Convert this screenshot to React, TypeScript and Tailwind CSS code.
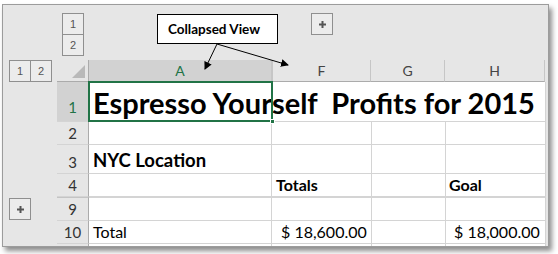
import React from 'react';

const cellFont = { fontFamily: 'Lato, "Liberation Sans", sans-serif' };

const OutlineBtn: React.FC<{ children: React.ReactNode; className?: string }> = ({ children, className = '' }) => (
  <div
    className={`w-[22px] h-[22px] border border-[#8f8f8f] bg-[#ececec] flex items-center justify-center text-[11px] text-[#555] ${className}`}
    style={{ fontFamily: '"Liberation Sans", Arial, sans-serif' }}
  >
    {children}
  </div>
);

const PlusIcon = () => (
  <svg width="9" height="9" viewBox="0 0 9 9">
    <path d="M4.5 1v7M1 4.5h7" stroke="#555" strokeWidth="2" />
  </svg>
);

// widths of the visible columns: A, F, G, H
const cols = [183, 100, 74, 100];

type RowProps = {
  n: string;
  h: string;
  selected?: boolean;
  topLine?: boolean;
  strip?: React.ReactNode;
  children: React.ReactNode;
};

const Row: React.FC<RowProps> = ({ n, h, selected, topLine, strip, children }) => (
  <div className={`flex shrink-0 ${h}`}>
    <div className="w-[54px] shrink-0 flex items-center pl-[6px]">{strip}</div>
    <div
      className={`w-[32px] shrink-0 border-b border-r border-r-[#ababab] border-b-[#d4d4d4] flex items-end justify-center pb-[3px] text-[15px] leading-none ${
        selected ? 'bg-[#d2d2d2] text-[#217346] pb-[6px]' : 'text-[#333]'
      } ${topLine ? 'border-t border-t-[#c4c4c4]' : ''}`}
      style={cellFont}
    >
      {n}
    </div>
    <div className={`flex bg-white ${topLine ? 'border-t border-t-[#d4d4d4]' : ''}`}>{children}</div>
  </div>
);

const Cell: React.FC<{ i: number; className?: string; children?: React.ReactNode }> = ({ i, className = '', children }) => (
  <div
    className={`shrink-0 border-b border-r border-[#d4d4d4] flex items-end whitespace-nowrap text-[16px] leading-none text-black ${className}`}
    style={{ ...cellFont, width: cols[i] }}
  >
    {children}
  </div>
);

export default function App() {
  return (
    <div className="relative w-[558px] h-[254px] bg-white overflow-hidden">
      <div className="ml-[2px] mt-[4px] w-[547px] h-[243px] border border-[#9c9c9c] bg-[#e6e6e6] shadow-[3px_4px_5px_rgba(0,0,0,0.45)] overflow-hidden flex flex-col">
        {/* top outline strip */}
        <div className="h-[55px] shrink-0 flex items-start pt-[8px] pl-[59px]">
          <div className="flex flex-col">
            <OutlineBtn>1</OutlineBtn>
            <OutlineBtn className="-mt-px">2</OutlineBtn>
          </div>
          <OutlineBtn className="ml-[227px]">
            <PlusIcon />
          </OutlineBtn>
        </div>

        {/* column headers */}
        <div className="flex h-[22px] shrink-0">
          <div className="w-[54px] shrink-0 flex items-center pl-[6px]">
            <OutlineBtn>1</OutlineBtn>
            <OutlineBtn className="-ml-px">2</OutlineBtn>
          </div>
          <div className="w-[32px] shrink-0 border-b border-r border-[#ababab] flex items-end justify-end p-[3px]">
            <svg width="13" height="13" viewBox="0 0 13 13">
              <path d="M13 0V13H0Z" fill="#b9b9b9" />
            </svg>
          </div>
          {['A', 'F', 'G', 'H'].map((c, i) => (
            <div
              key={c}
              className={`shrink-0 border-b border-r border-b-[#ababab] border-r-[#c6c6c6] flex items-center justify-center text-[14px] ${
                i === 0 ? 'bg-[#d2d2d2] text-[#217346]' : 'text-[#444]'
              } ${i === 1 ? 'border-l border-l-[#c6c6c6]' : ''}`}
              style={{ ...cellFont, width: i === 1 ? cols[i] - 1 : cols[i] }}
            >
              {c}
            </div>
          ))}
        </div>

        {/* row 1 */}
        <Row n="1" h="h-[40px]" selected>
          <div className="relative shrink-0 border-b border-[#d4d4d4] flex items-end" style={{ width: cols[0] }}>
            <span
              className="pl-[4px] pb-[4px] whitespace-nowrap text-[29px] font-bold leading-none text-black"
              style={cellFont}
            >
              Espresso Yourself&nbsp; Profits for 2015
            </span>
            <div className="absolute -left-px -top-px -right-px -bottom-px border-2 border-[#217346]" />
            <div className="absolute -right-[3px] -bottom-[3px] w-[5px] h-[5px] bg-[#217346] border border-white" />
          </div>
          <div className="border-b border-r border-[#d4d4d4]" style={{ width: cols[1] + cols[2] + cols[3] }} />
        </Row>

        {/* row 2 */}
        <Row n="2" h="h-[23px]">
          <Cell i={0} />
          <Cell i={1} />
          <Cell i={2} />
          <Cell i={3} />
        </Row>

        {/* row 3 */}
        <Row n="3" h="h-[29px]">
          <Cell i={0} className="pl-[4px] pb-[4px] text-[18.5px] font-bold">
            NYC Location
          </Cell>
          <Cell i={1} />
          <Cell i={2} />
          <Cell i={3} />
        </Row>

        {/* row 4 */}
        <Row n="4" h="h-[23px]">
          <Cell i={0} />
          <Cell i={1} className="pl-[4px] pb-[3px] font-bold">
            Totals
          </Cell>
          <Cell i={2} />
          <Cell i={3} className="pl-[3px] pb-[3px] font-bold">
            Goal
          </Cell>
        </Row>

        {/* row 9 (rows 5-8 hidden) */}
        <Row
          n="9"
          h="h-[24px]"
          topLine
          strip={
            <OutlineBtn className="h-[21px]">
              <PlusIcon />
            </OutlineBtn>
          }
        >
          <Cell i={0} />
          <Cell i={1} />
          <Cell i={2} />
          <Cell i={3} />
        </Row>

        {/* row 10 */}
        <Row n="10" h="h-[23px]">
          <Cell i={0} className="pl-[4px] pb-[3px]">
            Total
          </Cell>
          <Cell i={1} className="pl-[9px] pb-[3px] text-[15.5px]">
            $ 18,600.00
          </Cell>
          <Cell i={2} />
          <Cell i={3} className="pl-[8px] pb-[3px] text-[15.5px]">
            $ 18,000.00
          </Cell>
        </Row>

        {/* row 11, cut off */}
        <Row n="" h="h-[4px]">
          <Cell i={0} />
          <Cell i={1} />
          <Cell i={2} />
          <Cell i={3} />
        </Row>
      </div>

      {/* callout */}
      <div
        className="absolute left-[157px] top-[14px] w-[121px] h-[30px] border border-black bg-white flex items-center justify-center pr-[7px] text-[13.5px] font-bold text-black"
        style={cellFont}
      >
        Collapsed View
      </div>
      <svg className="absolute left-0 top-0 pointer-events-none" width="558" height="254" viewBox="0 0 558 254">
        <defs>
          <marker id="ah" markerWidth="8" markerHeight="8" refX="7" refY="4" orient="auto" markerUnits="userSpaceOnUse">
            <path d="M0 0L8 4L0 8Z" fill="#000" />
          </marker>
        </defs>
        <line x1="217" y1="44" x2="205" y2="69" stroke="#000" strokeWidth="1" markerEnd="url(#ah)" />
        <line x1="217" y1="44" x2="288" y2="65" stroke="#000" strokeWidth="1" markerEnd="url(#ah)" />
      </svg>
    </div>
  );
}
